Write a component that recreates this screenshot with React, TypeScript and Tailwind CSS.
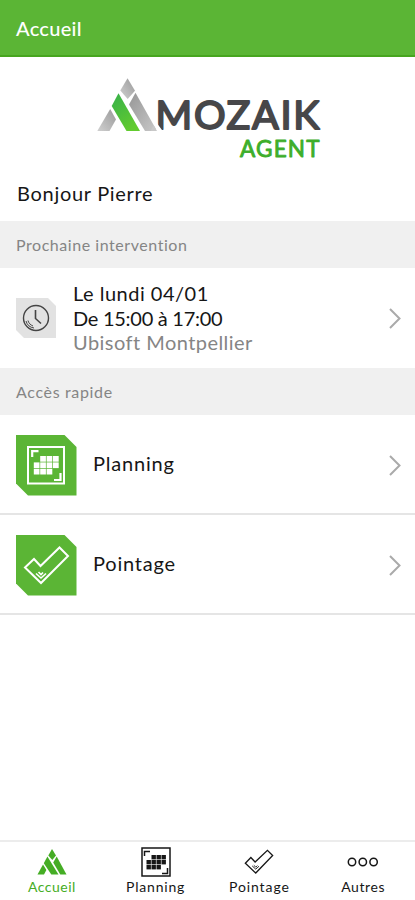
import clsx from "clsx";

const rows = [
  { label: "Planning", icon: PlanningTile },
  { label: "Pointage", icon: PointageTile },
];

const tabs = [
  { label: "Accueil", icon: HomeIcon, active: true, tracking: "tracking-[0.5px]" },
  { label: "Planning", icon: PlanningIcon, active: false, tracking: "tracking-[0.8px]" },
  { label: "Pointage", icon: CheckIcon, active: false, tracking: "tracking-[0.9px]" },
  { label: "Autres", icon: MoreIcon, active: false, tracking: "tracking-[0.6px]" },
];

// 4 columns x 3 rows, with the top-left and bottom-right cells left out
const cells = [
  [1, 0], [2, 0], [3, 0],
  [0, 1], [1, 1], [2, 1], [3, 1],
  [0, 2], [1, 2], [2, 2],
];

function Logo() {
  return (
    <svg width="226" height="84" viewBox="96 77 226 84" className="block" role="img" aria-label="Mozaik Agent">
      <defs>
        <linearGradient id="grey" x1="0" y1="1" x2="1" y2="0">
          <stop offset="0" stopColor="#d0d0d0" />
          <stop offset="1" stopColor="#999999" />
        </linearGradient>
        <linearGradient id="greyRight" x1="0" y1="0" x2="1" y2="1">
          <stop offset="0" stopColor="#969696" />
          <stop offset="1" stopColor="#c8c8c8" />
        </linearGradient>
        <linearGradient id="green" x1="0" y1="0" x2="0.6" y2="1">
          <stop offset="0" stopColor="#36b04a" />
          <stop offset="1" stopColor="#62cb2f" />
        </linearGradient>
      </defs>
      <path d="M127.5 78.3L135 90.7L127.7 99L120.3 90.5Z" fill="url(#grey)" />
      <path d="M118.5 93.3L140 131H126.5L111.7 106Z" fill="url(#green)" />
      <path d="M110.2 109L116 119.5L109.5 131H97.3Z" fill="url(#grey)" />
      <path d="M135.5 92.7L157 131H145L129 104.5Z" fill="url(#greyRight)" />
      <g fontFamily="Lato, sans-serif" strokeLinejoin="round">
        <text x="155.5" y="129" fontSize="39.5" textLength="164" lengthAdjust="spacing" fill="#474749" stroke="#474749" strokeWidth="1.9">
          MOZAIK
        </text>
        <text x="240" y="156.5" fontSize="22.5" textLength="79.5" lengthAdjust="spacing" fill="#3dae2b" stroke="#3dae2b" strokeWidth="0.9">
          AGENT
        </text>
      </g>
      <path d="M156 122L163.5 132H156Z" fill="white" />
      <path d="M153.5 124.8L157 131H151Z" fill="#c8c8c8" />
    </svg>
  );
}

function HomeIcon() {
  return (
    <svg width="30" height="26" viewBox="0 0 30 26" fill="currentColor">
      <path d="M15 0L19 6.5L15.3 11L11.3 6.5Z" />
      <path d="M10.4 7.5L21.5 25.5H14.3L6.8 14.2Z" />
      <path d="M6 15.5L9.4 21L7 25.5H0.5Z" />
      <path d="M19.7 7.5L29.5 25.5H23.3L16.2 13.5Z" />
    </svg>
  );
}

function PlanningIcon() {
  return (
    <svg width="30" height="30" viewBox="0 0 30 30" fill="none" stroke="currentColor">
      <rect x="1" y="1" width="28" height="28" strokeWidth="1.5" />
      <path d="M3.5 9V4.5H9M26.5 21V26.5H21" strokeWidth="1.5" />
      {cells.map(([x, y]) => (
        <rect key={`${x}-${y}`} x={5.5 + x * 5} y={8 + y * 5} width="4.4" height="4.4" fill="currentColor" stroke="none" />
      ))}
    </svg>
  );
}

function CheckIcon() {
  return (
    <svg width="30" height="26" viewBox="0 0 46 40" fill="none" stroke="currentColor" strokeWidth="2">
      <path d="M2 22L10.5 13L17 20L36 2L44 10L18 37Z" />
      <path d="M12.5 26L18 31L23 26.5M15 25L18 28L20.5 25.5" strokeWidth="1.4" />
    </svg>
  );
}

function MoreIcon() {
  return (
    <svg width="32" height="12" viewBox="0 0 32 12" fill="none" stroke="currentColor" strokeWidth="1.5">
      <circle cx="5" cy="6" r="3.7" />
      <circle cx="15.8" cy="6" r="3.7" />
      <circle cx="26.6" cy="6" r="3.7" />
    </svg>
  );
}

function PlanningTile() {
  return (
    <svg width="61" height="61" viewBox="0 0 61 61" fill="none">
      <path d="M0 0H48.5L60.5 12V60.5H12L0 48.5Z" fill="#5bb535" />
      <rect x="12" y="12" width="36" height="36.5" stroke="white" strokeWidth="2" />
      <path d="M16.2 22V16.2H22.5M44.5 38V45H38" stroke="white" strokeWidth="2.2" />
      {cells.map(([x, y]) => (
        <rect key={`${x}-${y}`} x={17.8 + x * 6.4} y={21 + y * 6.4} width="5.7" height="5.7" fill="white" />
      ))}
    </svg>
  );
}

function PointageTile() {
  return (
    <svg width="61" height="61" viewBox="0 0 61 61" fill="none" stroke="white">
      <path d="M0 0H48.5L60.5 12V60.5H12L0 48.5Z" fill="#5bb535" stroke="none" />
      <path d="M9 32.5L18 24L24.5 31L43.5 12.5L52 21L25 48Z" strokeWidth="2" />
      <path d="M20 38.5L25 43L30 38.5M22.5 37L25 39.5L27 37.5" strokeWidth="1.6" />
    </svg>
  );
}

function ClockTile() {
  return (
    <svg width="41" height="41" viewBox="0 0 41 41" fill="none" stroke="#444444">
      <path d="M0 0H32L40 8V40H8L0 32Z" fill="#e2e2e2" stroke="none" />
      <circle cx="20" cy="20" r="12.5" strokeWidth="1.4" />
      <path d="M19.5 12V20.5L25 25.5" strokeWidth="1.6" />
      <path d="M10 23C11 27 14 29.5 18 30M12 22.5C12.5 25 14.5 27 17 28" strokeWidth="1" />
    </svg>
  );
}

function Chevron() {
  return (
    <svg width="12" height="21" viewBox="0 0 12 21" fill="none" stroke="#aaaaaa" strokeWidth="2" className="shrink-0">
      <path d="M1 1L10.5 10.5L1 20" />
    </svg>
  );
}

function SectionTitle({ children, className }: { children: string; className?: string }) {
  return (
    <h2 className={clsx("flex h-[47px] items-center bg-[#f0f0f0] pl-4 text-base text-[#858585]", className)}>
      {children}
    </h2>
  );
}

export default function App() {
  return (
    <div className="flex h-[900px] w-full flex-col bg-white font-['Lato',sans-serif] text-[#161616]">
      <header className="flex h-[57px] items-center border-b-2 border-[#47a51f] bg-[#5bb535] pl-4 text-[20px] font-medium text-white">
        <h1 className="tracking-[0.3px]">Accueil</h1>
      </header>

      <div className="flex h-[112px] items-start pt-5 pl-24">
        <Logo />
      </div>
      <p className="h-[52px] pt-[9px] pl-[17px] text-[20px] leading-[30px] tracking-[0.7px]">Bonjour Pierre</p>

      <SectionTitle className="tracking-[0.55px]">Prochaine intervention</SectionTitle>
      <div className="flex h-[100px] items-center pr-[14px] pl-4">
        <ClockTile />
        <div className="ml-4 flex-1 text-[20px] leading-[24.5px]">
          <p className="tracking-[0.5px]">Le lundi 04/01</p>
          <p className="tracking-[-0.27px]">De 15:00 à 17:00</p>
          <p className="tracking-[0.45px] text-[#858585]">Ubisoft Montpellier</p>
        </div>
        <Chevron />
      </div>

      <SectionTitle className="tracking-[0.65px]">Accès rapide</SectionTitle>
      {rows.map(({ label, icon: Icon }) => (
        <div key={label} className="flex h-[100px] items-center border-b-2 border-[#e5e5e5] pt-0.5 pr-[14px] pl-4">
          <Icon />
          <span className="mb-1 ml-4 flex-1 text-[20px] tracking-[0.8px]">{label}</span>
          <Chevron />
        </div>
      ))}

      <nav className="mt-auto grid h-[60px] grid-cols-4 border-t-2 border-[#ececec]">
        {tabs.map(({ label, icon: Icon, active, tracking }) => (
          <div key={label} className={clsx("flex flex-col items-center", active && "text-[#45ad25]")}>
            <div className="flex h-10 items-center">
              <Icon />
            </div>
            <span className={clsx("-mt-[3px] text-[14px] leading-4", tracking)}>{label}</span>
          </div>
        ))}
      </nav>
    </div>
  );
}
